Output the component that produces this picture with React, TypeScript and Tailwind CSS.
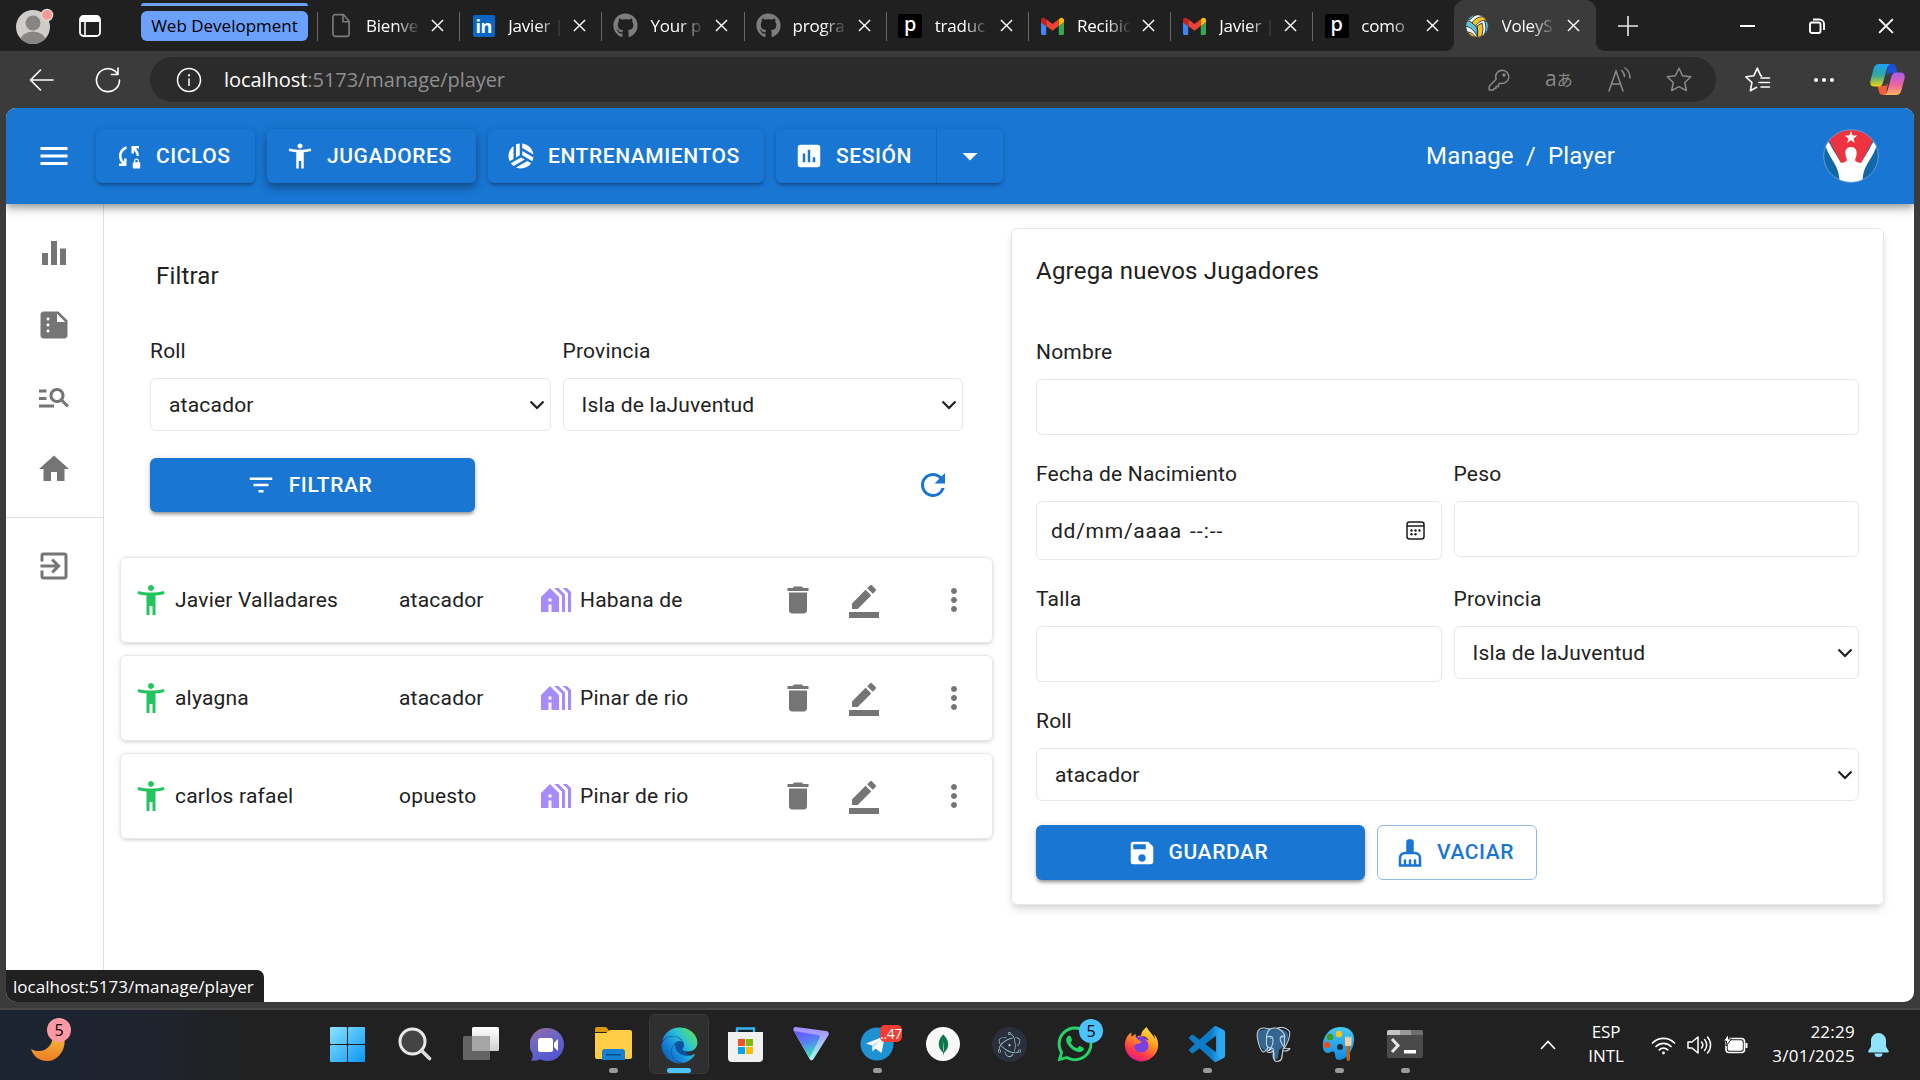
import React from 'react';
import {
  MdAccessibilityNew, MdArrowDropDown, MdCleaningServices, MdDelete, MdEqualizer, MdExitToApp,
  MdFilterList, MdHolidayVillage, MdHome, MdManageSearch, MdMenu, MdMoreVert, MdPoll, MdRefresh,
  MdSave, MdSportsVolleyball, MdSummarize, MdSyncLock,
} from 'react-icons/md';
import { FaEdge, FaFirefoxBrowser, FaGithub, FaWhatsapp } from 'react-icons/fa';
import { SiElectron, SiMongodb, SiPostgresql } from 'react-icons/si';

/* ---------- Browser chrome icons ---------- */

const Cross = ({ size = 13, w = 1.5 }: { size?: number; w?: number }) => (
  <svg width={size} height={size} viewBox="0 0 14 14" fill="none" stroke="#fff" strokeWidth={w}>
    <path d="M1 1l12 12M13 1L1 13" />
  </svg>
);

const FileIcon = () => (
  <svg width="19" height="25" viewBox="0 0 20 25" fill="none" stroke="#7c7c7c" strokeWidth="1.7" strokeLinejoin="round">
    <path d="M3.5 1h8.500l6 7v13.500a2.500 2.500 0 0 1-2.500 2.500h-12A2.500 2.500 0 0 1 1 21.500v-18A2.500 2.500 0 0 1 3.500 1zM11.500 1v7.500h6.500" />
  </svg>
);

const LinkedInIcon = () => (
  <span className="flex size-[22px] items-end justify-center rounded-[2px] bg-[#0a66c2] font-['Open_Sans',sans-serif] text-[18px] font-bold leading-[22px] tracking-[-0.5px] text-white">
    in
  </span>
);

const GmailIcon = () => (
  <svg width="23" height="18" viewBox="0 49.400 512 399.420">
    <path fill="#4285f4" d="M34.910 448.818h81.454V251L0 163.727V413.910c0 19.287 15.622 34.910 34.910 34.910z" />
    <path fill="#34a853" d="M395.636 448.818h81.455c19.287 0 34.909-15.622 34.909-34.909V163.727L395.636 251z" />
    <path fill="#fbbc04" d="M395.636 99.727V251L512 163.727v-46.545c0-43.142-49.250-67.782-83.782-41.891z" />
    <path fill="#ea4335" d="M116.364 251V99.727L256 204.455 395.636 99.727V251L256 355.727z" />
    <path fill="#c5221f" d="M0 117.182v46.545L116.364 251V99.727L83.782 75.291C49.250 49.400 0 74.040 0 117.182z" />
  </svg>
);

const PIcon = () => (
  <span className="flex size-6 items-center justify-center rounded-[2px] bg-black pb-[3px] font-['Noto_Sans',sans-serif] text-[20px] font-medium leading-none text-white">
    p
  </span>
);

const VolleyIcon = () => (
  <svg width="24" height="24" viewBox="0 0 24 24" stroke="#1c1c1c" strokeWidth=".8">
    <defs><clipPath id="ball"><circle cx="12" cy="12" r="11.500" /></clipPath></defs>
    <g clipPath="url(#ball)">
      <rect width="24" height="24" fill="#f3f5f7" />
      <path fill="#5cc3da" d="M1 7c5 0 9 3 11 7l.5 9C10 17 6 13 0 12z" />
      <path fill="#f4c22b" d="M7 9c3-5 8-7 13-6l2 3c-5 0-9 2-11.500 6z" />
      <path fill="#5cc3da" d="M19.500 7L24 8v8l-5 6c2-5 2.500-10 .5-15z" />
      <path fill="#f4c22b" d="M12 12l5-3c1.500 5 1 10-1 15h-4c1-4 1-8 0-12z" />
      <path fill="#f4c22b" d="M1 18c4 0 7 1 10 6H4z" />
      <path fill="#5cc3da" d="M5 0h9c-4 1-7 3-9 6L1 6z" />
    </g>
    <circle cx="12" cy="12" r="11.400" fill="none" />
  </svg>
);

const GithubTab = () => <FaGithub className="size-[25px] text-[#7d7d7d]" />;

const tabs: { title: string; icon: () => React.JSX.Element; active?: boolean }[] = [
  { title: 'Bienve', icon: FileIcon },
  { title: 'Javier |', icon: LinkedInIcon },
  { title: 'Your p', icon: GithubTab },
  { title: 'progra', icon: GithubTab },
  { title: 'traduc', icon: PIcon },
  { title: 'Recibid', icon: GmailIcon },
  { title: 'Javier |', icon: GmailIcon },
  { title: 'como', icon: PIcon },
  { title: 'VoleyS', icon: VolleyIcon, active: true },
];

function TabStrip() {
  return (
    <div className="flex h-[51px] shrink-0 bg-[#202020]">
      <div className="flex w-[317px] shrink-0 items-center">
        <svg className="ml-4 shrink-0" width="38" height="38" viewBox="0 0 38 38">
          <defs><clipPath id="avatar"><circle cx="17" cy="20" r="17" /></clipPath></defs>
          <g clipPath="url(#avatar)">
            <rect width="38" height="38" fill="#cfcdc9" />
            <circle cx="17" cy="16" r="7.500" fill="#878481" />
            <ellipse cx="17" cy="34" rx="12.500" ry="9.500" fill="#878481" />
          </g>
          <circle cx="31" cy="8" r="6.300" fill="#dedcd8" />
          <circle cx="31" cy="8" r="5" fill="#f99a94" />
        </svg>
        <svg className="ml-[25px] shrink-0" width="22" height="22" viewBox="0 0 22 22">
          <rect x="1" y="1" width="20" height="20" rx="3.500" fill="none" stroke="#fff" strokeWidth="1.800" />
          <path d="M1 4.500A3.500 3.500 0 0 1 4.500 1h13A3.500 3.500 0 0 1 21 4.500V7H1z" fill="#fff" />
          <path d="M6 7v14" stroke="#fff" strokeWidth="1.600" />
        </svg>
        <div className="ml-10 flex h-[51px] w-[167px] flex-col pt-[3px]">
          <div className="h-[3px] rounded-t bg-[#6ba1fb]" />
          <div className="mt-[5px] flex h-[30px] items-center justify-center rounded-md bg-[#6ba1fb] pb-[2px] text-[17px] leading-none text-black">
            Web Development
          </div>
        </div>
      </div>
      {tabs.map(({ title, icon: Icon, active }, i) => (
        <div
          key={i}
          className={
            active
              ? 'relative -ml-px flex w-[142px] shrink-0 items-center rounded-t-[11px] bg-[#3b3b3b]'
              : 'relative flex w-[142.2px] shrink-0 items-center'
          }
        >
          {!active && <span className="absolute left-0 top-3 h-[29px] w-px bg-[#666]" />}
          {active && (
            <>
              <span className="absolute -left-2 bottom-0 size-2 bg-[radial-gradient(circle_at_0_0,transparent_7.500px,#3b3b3b_8px)]" />
              <span className="absolute -right-2 bottom-0 size-2 bg-[radial-gradient(circle_at_100%_0,transparent_7.500px,#3b3b3b_8px)]" />
            </>
          )}
          <span className={active ? 'ml-[11px] flex w-[25px] justify-center' : 'ml-[12px] flex w-[25px] justify-center'}><Icon /></span>
          <span className="ml-[12px] w-[53px] overflow-hidden whitespace-nowrap text-[17px] tracking-[-0.2px] text-white [mask-image:linear-gradient(to_right,#000_55%,transparent_103%)]">
            {title}
          </span>
          <span className="ml-[12px]"><Cross /></span>
        </div>
      ))}
      <div className="flex flex-1 items-center">
        <svg className="ml-[21px]" width="22" height="22" viewBox="0 0 22 22" stroke="#e8e8e8" strokeWidth="1.600">
          <path d="M11 1v20M1 11h20" />
        </svg>
        <div className="ml-auto flex items-center pr-[26px]">
          <span className="h-[2px] w-[15px] bg-white" />
          <svg className="ml-[54px]" width="16" height="16" viewBox="0 0 16 16" fill="none" stroke="#fff" strokeWidth="1.900">
            <rect x="1" y="4.500" width="10.500" height="10.500" rx="2" />
            <path d="M4 1.500h6.500a4.500 4.500 0 0 1 4.500 4.500v6" />
          </svg>
          <span className="ml-[53px]"><Cross size={16} w={1.700} /></span>
        </div>
      </div>
    </div>
  );
}

function AddressBar() {
  return (
    <div className="flex h-[57px] shrink-0 items-center bg-[#3b3b3b]">
      <svg className="ml-[29px]" width="25" height="22" viewBox="0 0 25 22" fill="none" stroke="#fff" strokeWidth="1.600" strokeLinecap="round" strokeLinejoin="round">
        <path d="M24 11H1.500M11.500 1l-10 10 10 10" />
      </svg>
      <svg className="ml-[41px]" width="26" height="26" viewBox="0 0 26 26" fill="none" stroke="#fff" strokeWidth="1.600" strokeLinecap="round" strokeLinejoin="round">
        <path d="M24.500 13A11.500 11.500 0 1 1 20 4l3 3M23 1v6.500h-6.500" />
      </svg>
      <div className="ml-[29px] flex h-[45px] w-[1566px] items-center rounded-full bg-[#2b2b2b]">
        <svg className="ml-[26px]" width="26" height="26" viewBox="0 0 26 26" fill="none" stroke="#fff" strokeWidth="1.500">
          <circle cx="13" cy="13" r="11.500" />
          <path d="M13 11.500V19" /><path d="M13 7.200v2" strokeWidth="1.900" />
        </svg>
        <span className="ml-[22px] text-[20px] leading-none tracking-[-0.05px] text-[#8f8f8f]">
          <span className="text-white">localhost</span>:5173/manage/player
        </span>
        <div className="ml-auto flex items-center text-[#8b8b8b]">
          <svg width="22" height="22" viewBox="0 0 22 22" fill="none" stroke="currentColor" strokeWidth="1.400" strokeLinejoin="round">
            <path d="M14.200 1.200a6.600 6.600 0 1 1-2 12.900L10.500 15.500v2H8v2H6L5.500 21H1.200v-3.800l6.900-7A6.600 6.600 0 0 1 14.200 1.200z" />
            <circle cx="16" cy="6" r="1" fill="currentColor" />
          </svg>
          <span className="ml-[35px] w-[28px] whitespace-nowrap pb-[3px] font-['Open_Sans','Noto_Sans_CJK_JP',sans-serif] text-[21px] leading-none">a<span className="text-[16px]">あ</span></span>
          <svg className="ml-[35px]" width="24" height="26" viewBox="0 0 24 26" fill="none" stroke="currentColor" strokeWidth="1.500" strokeLinecap="round">
            <path d="M1 24L8 4l7 20M3.500 17h9M13.500 3.500c2 1.500 3 3.500 3 6M17 1c3.500 2.500 5 6 5 10" />
          </svg>
          <svg className="mr-[24px] ml-[34px]" width="26" height="25" viewBox="0 0 26 25" fill="none" stroke="currentColor" strokeWidth="1.500" strokeLinejoin="round">
            <path d="M13 1.200l3.600 7.500 8.200 1.100-6 5.700 1.500 8.200L13 19.700l-7.300 4 1.500-8.200-6-5.700 8.200-1.100z" />
          </svg>
        </div>
      </div>
      <svg className="ml-[29px]" width="26" height="25" viewBox="0 0 26 25" fill="none" stroke="#fff" strokeWidth="1.600" strokeLinejoin="round" strokeLinecap="round">
        <path d="M16.500 8.900l-.8-.2L12.300 1.200 8.900 8.700.9 9.800l6 5.700-1.500 8.200 6.300-3.400M16 11h8.500M14 15.500h10.500M16 20h8.500" />
      </svg>
      <svg className="ml-[43px]" width="20" height="4" viewBox="0 0 20 4" fill="#fff">
        <circle cx="2" cy="2" r="2" /><circle cx="10" cy="2" r="2" /><circle cx="18" cy="2" r="2" />
      </svg>
      <svg className="ml-[36px]" width="35" height="31" viewBox="0 0 35 31">
        <defs>
          <linearGradient id="cpA" x1="0" y1="0" x2="0" y2="1"><stop offset="0" stopColor="#1fa2f5" /><stop offset=".5" stopColor="#30a8a0" /><stop offset="1" stopColor="#f5d40a" /></linearGradient>
          <linearGradient id="cpB" x1="0" y1="0" x2="0" y2="1"><stop offset="0" stopColor="#a65bf0" /><stop offset=".55" stopColor="#f0639e" /><stop offset="1" stopColor="#ffb35c" /></linearGradient>
        </defs>
        <path d="M18 0h4c2.500 0 3.500 1.500 4 3.500L27.500 9h-6c-3 0-4 1-5 4z" fill="#1c4fd6" />
        <path d="M16 31h-3c-2.500 0-3.500-1.500-4-3.500L7.500 22H13c3 0 4-1 5-4z" fill="#f0603a" />
        <path d="M9 0h11c-2 1-2.700 3-3.500 6l-3.300 12c-.8 3-2 4.500-4.700 4.500H4c-3 0-4.300-2.500-3.500-6L3.500 5C4.300 2 6 0 9 0z" fill="url(#cpA)" />
        <path d="M26 31H14.500c2-1 2.700-3 3.500-6l3.300-12c.8-3 2-4.500 4.700-4.500h5c3 0 4.300 2.500 3.500 6L31.500 26c-.8 3-2.500 5-5.500 5z" fill="url(#cpB)" />
      </svg>
    </div>
  );
}

/* ---------- Web application ---------- */

const NAV_SHADOW = 'shadow-[0_4px_2px_-3px_rgba(0,0,0,0.2),0_3px_3px_0_rgba(0,0,0,0.14),0_1px_7px_0_rgba(0,0,0,0.12)]';

function NavButton({ icon, label, className }: { icon: React.ReactNode; label: string; className: string }) {
  return (
    <div className={`flex h-[54px] items-center rounded-md bg-[#1976d2] pl-[18px] ${className}`}>
      <span className="flex size-[30px] items-center justify-center text-[30px]">{icon}</span>
      <span className="ml-3 text-[21px] font-medium leading-none tracking-[0.57px]">{label}</span>
    </div>
  );
}

const TeamLogo = () => (
  <svg width="56" height="54" viewBox="0 0 56 54">
    <defs><clipPath id="logo"><ellipse cx="28" cy="27" rx="27.300" ry="26.300" /></clipPath></defs>
    <g clipPath="url(#logo)">
      <rect width="56" height="54" fill="#1267a8" />
      <path d="M0 0h56L38 34H18z" fill="#ee3340" />
      <path d="M2 12c3-1 5 3 7 7l9 15c4-1 5-1 6-3-3-7-2-13 4-13s7 6 4 13c1 2 2 2 6 3l9-15c2-4 4-8 7-7 0 5-2 10-5 15-4 7-8 12-9 20l-1 8H17l-1-8c-1-8-5-13-9-20-3-5-5-10-5-15z" fill="#fff" />
      <path d="M28 2l1.600 4.500h4.700l-3.800 2.900 1.400 4.600-3.900-2.800-3.900 2.800 1.400-4.600-3.800-2.900h4.700z" fill="#fff" />
    </g>
    <ellipse cx="28" cy="27" rx="27.300" ry="26.300" fill="none" stroke="#7fb0dd" strokeWidth=".7" />
  </svg>
);

function AppHeader() {
  return (
    <header className="z-10 flex h-24 shrink-0 items-center bg-[#1976d2] text-white shadow-[0_3px_6px_-1px_rgba(0,0,0,0.22),0_6px_8px_0_rgba(0,0,0,0.15),0_2px_15px_0_rgba(0,0,0,0.13)]">
      <MdMenu className="ml-[30px] size-9" />
      <nav className="ml-6 flex gap-3">
        <NavButton className={`w-[159px] ${NAV_SHADOW}`} icon={<MdSyncLock />} label="CICLOS" />
        <NavButton
          className="w-[209px] shadow-[0_3px_6px_-1px_rgba(0,0,0,0.2),0_6px_8px_0_rgba(0,0,0,0.14),0_2px_14px_0_rgba(0,0,0,0.12)]"
          icon={<MdAccessibilityNew />}
          label="JUGADORES"
        />
        <NavButton className={`w-[276px] ${NAV_SHADOW}`} icon={<MdSportsVolleyball />} label="ENTRENAMIENTOS" />
        <div className={`flex rounded-md ${NAV_SHADOW}`}>
          <NavButton className="w-[161px] rounded-r-none border-r border-[#1565c0]" icon={<MdPoll />} label="SESIÓN" />
          <div className="flex w-[66px] items-center justify-center"><MdArrowDropDown className="size-9" /></div>
        </div>
      </nav>
      <div className="ml-auto mr-[208px] flex gap-3 text-[24px] leading-none tracking-[0.2px]">
        <span>Manage</span><span>/</span><span>Player</span>
      </div>
      <div className="mr-[35px]"><TeamLogo /></div>
    </header>
  );
}

function Sidebar() {
  const item = 'flex h-[72px] items-center justify-center pr-[2px]';
  return (
    <aside className="w-[98px] shrink-0 border-r border-[#e0e0e0] pt-[13px] text-[36px] text-[#757575]">
      <div className={item}><MdEqualizer /></div>
      <div className={item}><MdSummarize /></div>
      <div className={item}><MdManageSearch /></div>
      <div className={item}><MdHome /></div>
      <div className="mt-3 mb-3 h-px bg-[#e0e0e0]" />
      <div className={item}><MdExitToApp /></div>
    </aside>
  );
}

const Label = ({ children }: { children: React.ReactNode }) => (
  <div className="flex h-9 items-center text-[21px] leading-none tracking-[0.2px]">{children}</div>
);

const Select = ({ value }: { value: string }) => (
  <div className="flex h-[53px] items-center justify-between rounded-md border border-[#e5e7eb] pr-[5px] pl-[18px] text-[21px] tracking-[0.2px]">
    <span className="pt-[2px]">{value}</span>
    <svg width="16" height="10" viewBox="0 0 16 10" fill="none" stroke="#1f1f1f" strokeWidth="2.200">
      <path d="M1.500 1.500L8 8l6.500-6.500" />
    </svg>
  </div>
);

const BTN_SHADOW = 'shadow-[0_4px_2px_-3px_rgba(0,0,0,0.2),0_3px_3px_0_rgba(0,0,0,0.2),0_1px_7px_0_rgba(0,0,0,0.14)]';

const players = [
  { name: 'Javier Valladares', role: 'atacador', city: 'Habana de' },
  { name: 'alyagna', role: 'atacador', city: 'Pinar de rio' },
  { name: 'carlos rafael', role: 'opuesto', city: 'Pinar de rio' },
];

const EditIcon = () => (
  <svg width="36" height="36" viewBox="0 0 24 24" fill="currentColor">
    <path d="M22 24H2v-4h20v4zM13.060 5.190l3.750 3.750L7.750 18H4v-3.750l9.060-9.060zm4.820 2.680l-3.750-3.750 1.830-1.830c.39-.39 1.020-.39 1.410 0l2.340 2.340c.39.39.39 1.020 0 1.410l-1.830 1.830z" />
  </svg>
);

function PlayerList() {
  return (
    <section className="ml-4 w-[873px] shrink-0 pt-6">
      <h2 className="ml-9 mt-[30px] flex h-9 items-center text-[24px] leading-none tracking-[0.18px]">Filtrar</h2>
      <div className="ml-[30px] mt-[39px] grid w-[813px] grid-cols-2 gap-x-3">
        <div><Label>Roll</Label><div className="mt-[9px]"><Select value="atacador" /></div></div>
        <div><Label>Provincia</Label><div className="mt-[9px]"><Select value="Isla de laJuventud" /></div></div>
      </div>
      <div className="mt-[27px] mr-[42px] ml-[30px] flex items-center justify-between">
        <div className={`flex h-[54px] w-[325px] items-center justify-center gap-[13px] rounded-md bg-[#1976d2] pr-[7px] text-[21px] font-medium tracking-[0.6px] text-white ${BTN_SHADOW}`}>
          <MdFilterList className="size-[30px]" /><span className="pt-[2px]">FILTRAR</span>
        </div>
        <MdRefresh className="size-9 text-[#1976d2]" />
      </div>
      <div className="mt-[45px] flex flex-col gap-3">
        {players.map((p) => (
          <div
            key={p.name}
            className="grid h-[86px] grid-cols-[54px_224px_138px_43px_197px_66px_90px_36px] items-center rounded-md border border-[#e5e7eb] pl-3 text-[21px] tracking-[0.2px] shadow-[0_1px_5px_0_rgba(0,0,0,0.1),0_2px_3px_-1px_rgba(0,0,0,0.1)]"
          >
            <MdAccessibilityNew className="size-9 text-[#22c55e]" />
            <span className="-ml-3 pt-[2px]">{p.name}</span>
            <span className="-ml-3 pt-[2px]">{p.role}</span>
            <MdHolidayVillage className="-ml-[11px] size-9 text-[#a78bfa]" />
            <span className="-ml-3 pt-[2px]">{p.city}</span>
            <MdDelete className="-ml-[9px] size-9 text-[#757575]" />
            <span className="-ml-[9px] text-[#757575]"><EditIcon /></span>
            <MdMoreVert className="-ml-[9px] size-9 text-[#757575]" />
          </div>
        ))}
      </div>
    </section>
  );
}

const CalendarIcon = () => (
  <svg width="19" height="19" viewBox="0 0 19 19" fill="none" stroke="#1a1a1a" strokeWidth="1.500">
    <rect x="1" y="1" width="17" height="17" rx="2.500" />
    <path d="M1 5h17" />
    <g fill="#1a1a1a" stroke="none">
      <circle cx="5.500" cy="9.500" r="1.200" /><circle cx="9.500" cy="9.500" r="1.200" /><circle cx="13.500" cy="9.500" r="1.200" />
      <circle cx="5.500" cy="13.300" r="1.200" /><circle cx="9.500" cy="13.300" r="1.200" />
    </g>
  </svg>
);

function PlayerForm() {
  const input = 'rounded-md border border-[#e5e7eb]';
  return (
    <section className="mt-6 ml-[18px] h-[677px] w-[873px] shrink-0 rounded-md border border-[#e5e7eb] px-6 shadow-[0_6px_9px_-1px_rgba(0,0,0,0.1),0_3px_6px_-2px_rgba(0,0,0,0.1)]">
      <h2 className="mt-6 flex h-9 items-center text-[24px] leading-none tracking-[0.22px]">Agrega nuevos Jugadores</h2>
      <div className="mt-[45px]"><Label>Nombre</Label></div>
      <div className={`mt-[9px] h-14 ${input}`} />
      <div className="mt-[21px] grid grid-cols-2 gap-x-3">
        <div>
          <Label>Fecha de Nacimiento</Label>
          <div className={`mt-[9px] flex h-[59px] items-center justify-between pr-[16px] pl-[14px] text-[21px] tracking-[0.75px] ${input}`}>
            <span className="flex gap-[8px] pt-[2px]"><span>dd/mm/aaaa</span><span className="tracking-[1px]">--:--</span></span><CalendarIcon />
          </div>
        </div>
        <div><Label>Peso</Label><div className={`mt-[9px] h-14 ${input}`} /></div>
      </div>
      <div className="mt-[21px] grid grid-cols-2 gap-x-3">
        <div><Label>Talla</Label><div className={`mt-[9px] h-14 ${input}`} /></div>
        <div><Label>Provincia</Label><div className="mt-[9px]"><Select value="Isla de laJuventud" /></div></div>
      </div>
      <div className="mt-[21px]"><Label>Roll</Label></div>
      <div className="mt-[9px]"><Select value="atacador" /></div>
      <div className="mt-6 flex gap-3">
        <div className={`flex h-[55px] w-[329px] items-center justify-center gap-3 rounded-md bg-[#1976d2] pr-1.5 text-[21px] font-medium tracking-[0.6px] text-white ${BTN_SHADOW}`}>
          <MdSave className="size-[30px]" />GUARDAR
        </div>
        <div className="flex h-[55px] w-[160px] items-center gap-3 rounded-md border border-[#8cbae8] pl-[17px] text-[21px] font-medium tracking-[0.6px] text-[#1976d2]">
          <MdCleaningServices className="size-[30px]" />VACIAR
        </div>
      </div>
    </section>
  );
}

/* ---------- Taskbar ---------- */

const StartIcon = () => (
  <svg width="35" height="35" viewBox="0 0 35 35">
    <defs><linearGradient id="win" x1="0" y1="0" x2="35" y2="35" gradientUnits="userSpaceOnUse"><stop stopColor="#8be3fd" /><stop offset="1" stopColor="#0a96f8" /></linearGradient></defs>
    <g fill="url(#win)"><rect width="17" height="17" rx="1" /><rect x="18" width="17" height="17" rx="1" /><rect y="18" width="17" height="17" rx="1" /><rect x="18" y="18" width="17" height="17" rx="1" /></g>
  </svg>
);

const SearchIcon = () => (
  <svg width="34" height="34" viewBox="0 0 34 34" fill="none">
    <circle cx="14.500" cy="14.500" r="12.500" fill="#444" stroke="#e8e8e8" strokeWidth="3" />
    <path d="M23.500 23.500l8 8" stroke="#d8dde0" strokeWidth="3.600" strokeLinecap="round" />
  </svg>
);

const TaskViewIcon = () => (
  <svg width="36" height="34" viewBox="0 0 36 34">
    <defs><linearGradient id="tv" x1="0" y1="0" x2="0" y2="1"><stop stopColor="#fff" /><stop offset="1" stopColor="#d0d0d0" /></linearGradient></defs>
    <rect y="9" width="27" height="24" rx="1.500" fill="#646464" />
    <rect x="9" width="27" height="24" rx="1.500" fill="url(#tv)" />
    <rect x="9" y="9" width="18" height="15" fill="#a6a6a6" />
  </svg>
);

const ChatIcon = () => (
  <svg width="35" height="35" viewBox="0 0 35 35">
    <defs><linearGradient id="chat" x1="0" y1="0" x2=".5" y2="1"><stop stopColor="#9a6b9c" /><stop offset=".5" stopColor="#6a66c8" /><stop offset="1" stopColor="#5457d0" /></linearGradient></defs>
    <path d="M17.500 1a16.500 16.500 0 1 1-7.500 31.200c-3 1.500-6 1.800-9 1.300 1.500-2 2-4 1.500-7A16.500 16.500 0 0 1 17.500 1z" fill="url(#chat)" />
    <rect x="8" y="11" width="15" height="14" rx="2.500" fill="#fff" /><path d="M24 16l4-4v12l-4-4z" fill="#fff" />
  </svg>
);

const FolderIcon = () => (
  <svg width="37" height="34" viewBox="0 0 37 34">
    <path d="M0 2a2 2 0 0 1 2-2h9l4 5H0z" fill="#d99b0c" />
    <path d="M0 6h11l4-3h20a2 2 0 0 1 2 2v25a2 2 0 0 1-2 2H2a2 2 0 0 1-2-2z" fill="#ffcd45" />
    <path d="M7 33v-8a3 3 0 0 1 3-3h17a3 3 0 0 1 3 3v8z" fill="#1481d2" />
    <rect x="11" y="27" width="15" height="1.500" fill="#0b4b8c" />
  </svg>
);

const EdgeIcon = () => (
  <>
    <svg width="0" height="0" className="absolute">
      <defs>
        <linearGradient id="edge" x1="1" y1=".2" x2=".1" y2=".9"><stop stopColor="#5be35a" /><stop offset=".35" stopColor="#2cc3d5" /><stop offset=".7" stopColor="#1687dc" /><stop offset="1" stopColor="#0b5cae" /></linearGradient>
      </defs>
    </svg>
    <svg width="36" height="36" viewBox="0 0 36 36">
      <circle cx="17" cy="19" r="15" fill="#0d52a0" />
      <path d="M24 14c5 6 2 9 1 12 2 2 6 2 8 1 3-3 4-14-3-20z" fill="#2f2f2f" />
    </svg>
    <FaEdge className="absolute size-[37px]" fill="url(#edge)" />
  </>
);

const StoreIcon = () => (
  <svg width="35" height="35" viewBox="0 0 35 35">
    <path d="M9 6V1.500h17V6" fill="none" stroke="#35b5f5" strokeWidth="2.400" />
    <path d="M0 5h35v26a4 4 0 0 1-4 4H4a4 4 0 0 1-4-4z" fill="#f1f1f1" />
    <rect x="10" y="12" width="7" height="7" fill="#f25022" /><rect x="18" y="12" width="7" height="7" fill="#7fba00" />
    <rect x="10" y="20" width="7" height="7" fill="#00a4ef" /><rect x="18" y="20" width="7" height="7" fill="#ffb900" />
  </svg>
);

const ProtonIcon = () => (
  <svg width="36" height="34" viewBox="0 0 36 34">
    <defs>
      <linearGradient id="pv" x1="0" y1="0" x2=".4" y2="1"><stop stopColor="#6c4dff" /><stop offset=".5" stopColor="#5a7cf6" /><stop offset="1" stopColor="#37e0c0" /></linearGradient>
      <linearGradient id="pv2" x1="0" y1="0" x2="0" y2="1"><stop stopColor="#a58aff" /><stop offset="1" stopColor="#a8fbe4" /></linearGradient>
    </defs>
    <path d="M3 0l30 4c2.500.4 3.500 2.500 2.300 4.500L20.500 32c-1 1.800-3 1.800-4-.2L.8 4C-.4 1.500 1-.2 3 0z" fill="url(#pv2)" />
    <path d="M1 4l24 4c2 .3 2.500 1.500 1.500 3.500L16.500 31z" fill="url(#pv)" />
  </svg>
);

const TelegramIcon = () => (
  <>
    <svg width="34" height="34" viewBox="0 0 34 34">
      <circle cx="17" cy="17" r="16.500" fill="#1f93d2" />
      <path d="M6 16.500L25 9l-3.500 17-6-4.500-3 3-.5-6z" fill="#fff" /><path d="M12 18.500l9-6.500-7.500 8-1 4.500z" fill="#b9d9ee" />
    </svg>
    <span className="absolute -top-px left-[33px] flex h-[17px] w-[22px] items-center justify-center rounded-[5px] bg-[#f23c34] text-[14px] leading-none tracking-[-0.5px] text-white">..47</span>
  </>
);

const MongoIcon = () => (
  <span className="flex size-[34px] items-center justify-center rounded-full bg-[#f8f8f8]">
    <SiMongodb className="size-[21px] text-[#0b7a4b]" />
  </span>
);

const ElectronIcon = () => (
  <span className="flex size-[35px] items-center justify-center rounded-full bg-[#2b2e3b]">
    <SiElectron className="size-[25px] text-[#a6d6df]" />
  </span>
);

const WhatsappIcon = () => (
  <>
    <FaWhatsapp className="size-[40px] text-[#25d366]" />
    <span className="absolute -top-[7px] left-[34px] flex size-6 items-center justify-center rounded-full bg-[#4cc2ff] text-[16px] leading-none text-black">5</span>
  </>
);

const FirefoxIcon = () => (
  <>
    <svg width="34" height="34" viewBox="0 0 34 34">
      <defs><linearGradient id="ff" x1=".8" y1="0" x2=".3" y2="1"><stop stopColor="#fff04a" /><stop offset=".4" stopColor="#ff9a1f" /><stop offset=".75" stopColor="#ff3b47" /><stop offset="1" stopColor="#e31587" /></linearGradient></defs>
      <circle cx="16" cy="18" r="9" fill="#7b3fe0" />
    </svg>
    <FaFirefoxBrowser className="absolute size-[35px]" fill="url(#ff)" />
  </>
);

const CodeIcon = () => (
  <svg width="36" height="36" viewBox="0 0 24 24">
    <defs><linearGradient id="vs" x1="0" y1="0" x2="1" y2="0"><stop offset=".6" stopColor="#0c7cc7" /><stop offset=".85" stopColor="#2aa8f2" /></linearGradient></defs>
    <path fill="url(#vs)" d="M23.150 2.587L18.210.210a1.494 1.494 0 0 0-1.705.290l-9.460 8.630-4.120-3.128a.999.999 0 0 0-1.276.057L.327 7.261A1 1 0 0 0 .326 8.740L3.899 12 .326 15.260a1 1 0 0 0 .001 1.479L1.650 17.940a.999.999 0 0 0 1.276.057l4.120-3.128 9.460 8.630a1.492 1.492 0 0 0 1.704.290l4.942-2.377A1.500 1.500 0 0 0 24 20.060V3.939a1.500 1.500 0 0 0-.850-1.352zm-5.146 14.861L10.826 12l7.178-5.448v10.896z" />
  </svg>
);

const PostgresIcon = () => (
  <>
    <svg width="34" height="34" viewBox="0 0 34 34"><path d="M2 6C4 0 30 0 32 7c1 6-3 10-5 13l-4 3-1 8c-3 3-6 1-6-2l-1-6-6 1C5 22 0 12 2 6z" fill="#336791" /></svg>
    <SiPostgresql className="absolute size-[35px] text-[#c9d8e6]" />
  </>
);

const PaintIcon = () => (
  <svg width="36" height="36" viewBox="0 0 36 36">
    <defs><linearGradient id="pt" x1="0" y1="0" x2="0" y2="1"><stop stopColor="#45c8f5" /><stop offset="1" stopColor="#1488dc" /></linearGradient></defs>
    <path d="M20 1c9 0 14 6 13 14-1 10-8 19-15 19-5 0-3-6-5-8s-5 3-9 0C-1 22 2 1 20 1z" fill="url(#pt)" />
    <circle cx="9" cy="11" r="3.300" fill="#3f9b1d" /><circle cx="18" cy="8" r="3.200" fill="#ffc21a" /><circle cx="6" cy="19" r="3.200" fill="#e8501e" /><circle cx="19" cy="21" r="3" fill="#1d2b3a" />
    <path d="M24 10l1.500 2 1.500-2 1.500 2 2-2v9l-2 2h-2.500l-2-2z" fill="#f2d3a4" /><path d="M25.500 20h3.500v13c0 2.500-3.500 2.500-3.500 0z" fill="#b5651d" />
  </svg>
);

const TerminalIcon = () => (
  <svg width="36" height="28" viewBox="0 0 36 28">
    <rect width="36" height="28" rx="2" fill="#4a4a4a" /><path d="M0 5V2a2 2 0 0 1 2-2h11v5z" fill="#c4c4c4" /><path d="M13 0h11v5H13z" fill="#9a9a9a" /><path d="M24 0h10a2 2 0 0 1 2 2v3H24z" fill="#6f6f6f" />
    <path d="M5 9l6 6.500L5 22" fill="none" stroke="#e6e6e6" strokeWidth="3" /><rect x="17" y="20" width="12" height="3.500" fill="#fff" />
  </svg>
);

const taskbarApps: { icon: () => React.JSX.Element; running?: boolean; active?: boolean }[] = [
  { icon: StartIcon }, { icon: SearchIcon }, { icon: TaskViewIcon }, { icon: ChatIcon },
  { icon: FolderIcon, running: true }, { icon: EdgeIcon, active: true }, { icon: StoreIcon },
  { icon: ProtonIcon }, { icon: TelegramIcon, running: true }, { icon: MongoIcon },
  { icon: ElectronIcon }, { icon: WhatsappIcon }, { icon: FirefoxIcon },
  { icon: CodeIcon, running: true }, { icon: PostgresIcon }, { icon: PaintIcon, running: true },
  { icon: TerminalIcon, running: true },
];

function Taskbar() {
  return (
    <footer className="flex h-[70px] shrink-0 bg-[linear-gradient(to_right,#1c2433_0,#1e232e_140px,#212121_250px)] text-white">
      <div className="relative ml-[30px] w-[287px]">
        <svg className="mt-[26px]" width="36" height="26" viewBox="0 0 36 26">
          <defs><linearGradient id="moon" x1="0" y1="0" x2="0" y2="1"><stop stopColor="#f6b73c" /><stop offset="1" stopColor="#ee7d22" /></linearGradient></defs>
          <path d="M1 13c9 5 21 1 22-13h11c3 12-5 25-17 25C9 25 3 20 1 13z" fill="url(#moon)" />
        </svg>
        <span className="absolute left-[17px] top-2 flex size-6 items-center justify-center rounded-full bg-[#ff99a4] text-[16px] leading-none text-black">5</span>
      </div>
      <div className="flex gap-[6px] [&>*:nth-child(2)]:ml-[2px]">
        {taskbarApps.map(({ icon: Icon, running, active }, i) => (
          <div
            key={i}
            className={
              active
                ? 'relative mt-1 flex h-[60px] w-[60px] flex-col items-center rounded-md border border-[#3a3a3a] bg-[#2f2f2f]'
                : 'relative mt-1 flex h-[60px] w-[60px] flex-col items-center'
            }
          >
            <div className="relative mt-[12px] flex h-9 w-[60px] items-center justify-center"><Icon /></div>
            {running && <span className="mt-[6px] h-[5px] w-[9px] rounded-full bg-[#9a9a9a]" />}
            {active && <span className="mt-[5px] h-[5px] w-6 shrink-0 rounded-full bg-[#4cc2ff]" />}
          </div>
        ))}
      </div>
      <div className="ml-auto flex h-[70px] items-center text-[17px] leading-[24px]">
        <svg width="16" height="10" viewBox="0 0 16 10" fill="none" stroke="#fff" strokeWidth="1.700"><path d="M1 9l7-7.500L15 9" /></svg>
        <div className="ml-[30px] w-[40px] pb-[2px] text-center tracking-[-0.1px]">ESP<br />INTL</div>
        <svg className="ml-[25px]" width="25" height="19" viewBox="0 0 25 19" fill="none" stroke="#fff" strokeWidth="1.700" strokeLinecap="round">
          <path d="M1.500 7a15.500 15.500 0 0 1 22 0M5 10.500a10.500 10.500 0 0 1 15 0M8.300 13.800a6 6 0 0 1 8.400 0" /><circle cx="12.500" cy="17" r="1.400" fill="#fff" stroke="none" />
        </svg>
        <svg className="ml-[11px]" width="25" height="20" viewBox="0 0 25 20" fill="none" stroke="#fff" strokeWidth="1.500" strokeLinecap="round" strokeLinejoin="round">
          <path d="M1 7v6h4l6 5V2L5 7zM14.500 7a4.500 4.500 0 0 1 0 6M17.500 4.500a8 8 0 0 1 0 11M20.500 2a12 12 0 0 1 0 16" />
        </svg>
        <svg className="-mt-[3px] ml-[11px]" width="25" height="20" viewBox="0 0 25 20" fill="none" stroke="#fff" strokeWidth="1.600">
          <rect x="3" y="4.500" width="18.500" height="14" rx="3" /><rect x="5.500" y="7" width="13.500" height="9" rx="1" fill="#fff" /><path d="M23.500 9v5" strokeWidth="2" />
          <path d="M5.500 0L.5 7h3L3 12l5.500-7H5.500z" fill="#fff" stroke="#212121" strokeWidth="1" />
        </svg>
        <div className="ml-[21px] w-[86px] pb-[2px] text-right tracking-[0.25px]">22:29<br />3/01/2025</div>
        <svg className="mr-[31px] ml-[13px]" width="21" height="24" viewBox="0 0 21 24" fill="#8fe3ff">
          <path d="M10.500 0a7.500 7.500 0 0 1 7.500 7.500v6l2.600 4.300c.5.900 0 1.700-.9 1.700H1.300c-.9 0-1.400-.8-.9-1.700L3 13.500v-6A7.500 7.500 0 0 1 10.500 0zM6.500 20.500h8a4 3.500 0 0 1-8 0z" />
        </svg>
      </div>
    </footer>
  );
}

export default function App() {
  return (
    <div className="flex h-[1080px] w-[1920px] flex-col overflow-hidden bg-[#3b3b3b] font-['Open_Sans',sans-serif]">
      <TabStrip />
      <AddressBar />
      <div className="relative mx-[6px] flex h-[894px] shrink-0 flex-col overflow-hidden rounded-[10px] bg-white font-[Roboto,sans-serif] text-[#212121]">
        <AppHeader />
        <div className="flex min-h-0 flex-1">
          <Sidebar />
          <PlayerList />
          <PlayerForm />
        </div>
        <div className="absolute bottom-0 left-0 z-20 flex h-8 w-[258px] items-center rounded-tr-[7px] bg-[#202020] pl-[7px] font-['Open_Sans',sans-serif] text-[17px] leading-none tracking-[0.03px] text-white">
          localhost:5173/manage/player
        </div>
      </div>
      <div className="mt-[6px] h-[2px] shrink-0 bg-[#474747]" />
      <Taskbar />
    </div>
  );
}
